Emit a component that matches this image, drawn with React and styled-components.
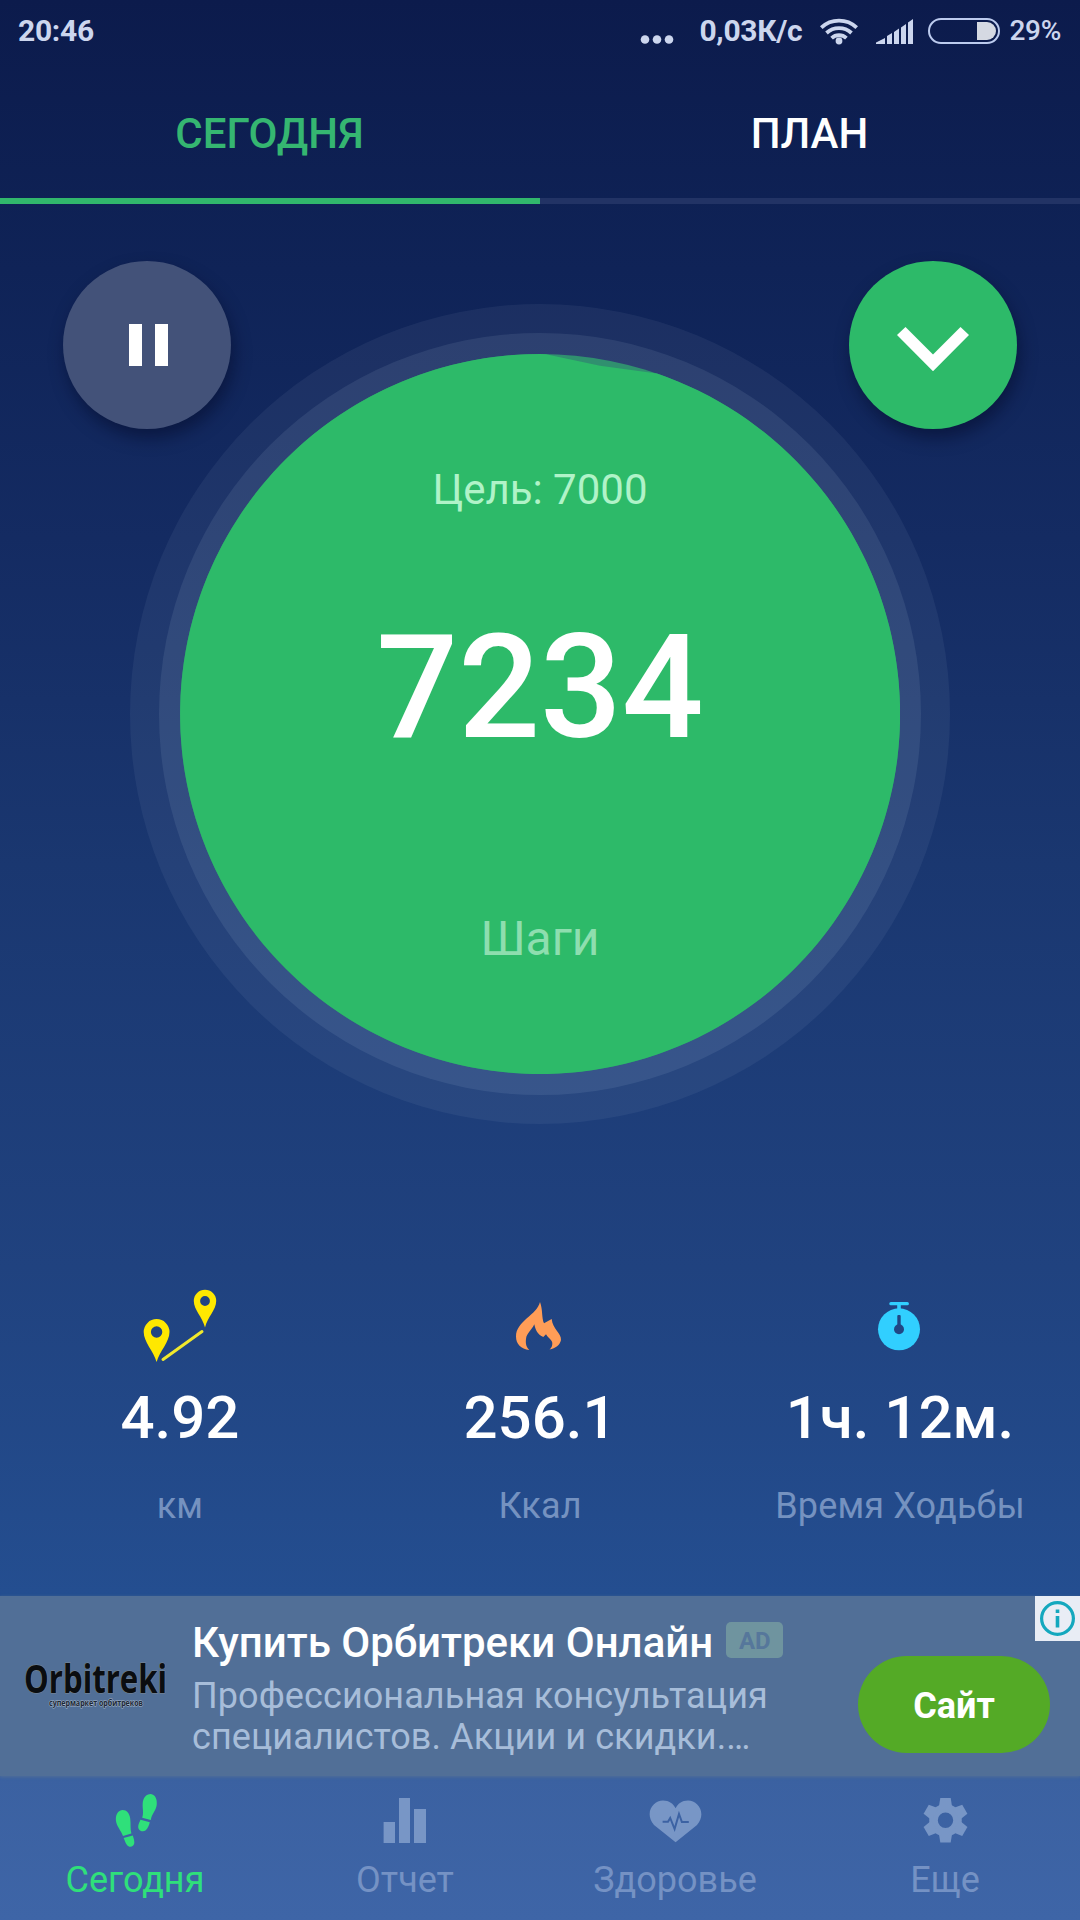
import styled, { createGlobalStyle } from "styled-components";

const GlobalStyle = createGlobalStyle`
    body {
        margin: 0;
        font-family: Roboto, "Noto Sans", sans-serif;
        color: #fff;
    }
`;

const Screen = styled.div`
    display: flex;
    flex-direction: column;
    width: 1080px;
    height: 1920px;
    overflow: hidden;
    background: linear-gradient(180deg, #0c1b4c 0%, #0f2357 14%, #142b62 28%, #1a3770 45%, #20427f 66%, #244e90 83%, #244e90 100%);
`;

const StatusBar = styled.header`
    display: flex;
    align-items: center;
    height: 60px;
    padding: 1px 19px 0 18px;
    box-sizing: border-box;
    color: #ccd6ee;
`;

const StatusText = styled.span`
    font-size: ${({ $size }) => $size || 30}px;
    font-weight: ${({ $weight }) => $weight || 700};
    line-height: 40px;
    letter-spacing: -0.3px;
    white-space: nowrap;
`;

const StatusRight = styled.div`
    display: flex;
    align-items: center;
    margin-left: auto;
`;

const StatusIcons = styled.svg`
    display: block;
    margin: 0 8px 0 17px;
`;

const DotsIcon = styled.svg`
    display: block;
    margin-right: 25px;
`;

const Tabs = styled.nav`
    display: flex;
    height: 144px;
`;

const Tab = styled.div`
    flex: 1;
    box-sizing: border-box;
    padding: 8px 1px 0 0;
    border-bottom: 6px solid ${({ $active }) => ($active ? "#31b76c" : "#223365")};
    color: ${({ $active }) => ($active ? "#35b671" : "#fff")};
    font-size: 42px;
    font-weight: 500;
    line-height: 132px;
    text-align: center;
`;

const Hero = styled.main`
    display: grid;
    height: 1080px;
`;

const HeroActions = styled.div`
    grid-area: 1 / 1;
    display: flex;
    justify-content: space-between;
    align-items: flex-start;
    padding: 57px 63px 0;
`;

const RoundButton = styled.button`
    display: flex;
    width: 168px;
    height: 168px;
    padding: 0;
    border: 0;
    border-radius: 50%;
    background: ${({ $color }) => $color};
    box-shadow: 3px 9px 16px rgba(3, 10, 40, 0.5);
`;

const Dial = styled.div`
    grid-area: 1 / 1;
    justify-self: center;
    align-self: start;
    width: 820px;
    height: 820px;
    box-sizing: border-box;
    margin-top: 100px;
    padding: 29px;
    border-radius: 50%;
    background: rgba(225, 235, 255, 0.06);
`;

const DialRing = styled.div`
    padding: 21px;
    border-radius: 50%;
    background: rgba(220, 238, 255, 0.085);
`;

const Disc = styled.div`
    position: relative;
    display: flex;
    flex-direction: column;
    align-items: center;
    height: 720px;
    box-sizing: border-box;
    padding-top: 111px;
`;

const DiscShape = styled.svg`
    position: absolute;
    inset: 0;
`;

const DiscText = styled.div`
    position: relative;
    margin-bottom: ${({ $gap }) => $gap || 0}px;
    color: ${({ $color }) => $color || "#fff"};
    font-size: ${({ $size }) => $size}px;
    font-weight: ${({ $weight }) => $weight || 400};
    line-height: ${({ $line }) => $line}px;
`;

const Stats = styled.section`
    display: grid;
    grid-template-columns: repeat(3, 1fr);
    height: 312px;
`;

const Stat = styled.div`
    display: flex;
    flex-direction: column;
    align-items: center;
`;

const StatValue = styled.div`
    margin-top: 19px;
    font-size: 60px;
    font-weight: 500;
    line-height: 70px;
`;

const StatLabel = styled.div`
    margin-top: 32px;
    color: #7592c0;
    font-size: 36px;
    line-height: 42px;
    letter-spacing: 0.15px;
`;

const Ad = styled.aside`
    position: relative;
    display: flex;
    height: 180px;
    box-sizing: border-box;
    padding-left: 25px;
    background: #516f97;
    box-shadow: 0 1px 3px #516f97;
`;

const AdLogo = styled.svg`
    overflow: visible;
`;

const AdBody = styled.div`
    width: 650px;
    margin-left: 23px;
    padding-top: 22px;
`;

const AdTitle = styled.div`
    display: flex;
    align-items: center;
    height: 50px;
    font-size: 42px;
    font-weight: 500;
    line-height: 50px;
    white-space: nowrap;
`;

const AdBadge = styled.span`
    width: 57px;
    height: 36px;
    margin: -6px 0 0 13px;
    border-radius: 5px;
    background: #6f949f;
    color: #56779b;
    font-size: 24px;
    font-weight: 700;
    line-height: 38px;
    text-align: center;
`;

const AdText = styled.p`
    margin: 8px 0 0;
    color: #a7bdd9;
    font-size: 36px;
    line-height: 41px;
    letter-spacing: 0.08px;
    white-space: nowrap;
`;

const AdButton = styled.button`
    width: 192px;
    height: 97px;
    margin: 60px 30px 0 auto;
    padding: 3px 0 0;
    border: 0;
    border-radius: 49px;
    background: #54aa26;
    color: #fff;
    font-family: inherit;
    font-size: 36px;
    font-weight: 700;
`;

const AdInfo = styled.svg`
    position: absolute;
    top: 0;
    right: 0;
    background: #e9edf5;
`;

const BottomNav = styled.nav`
    display: grid;
    grid-template-columns: repeat(4, 1fr);
    height: 144px;
    background: linear-gradient(180deg, #3b61a1, #3e65a7);
`;

const NavItem = styled.div`
    display: flex;
    flex-direction: column;
    align-items: center;
    padding-top: 14px;
    color: ${({ $active }) => ($active ? "#2fe07a" : "#7592c4")};
    font-size: 36px;
    line-height: 44px;
`;

const NavIcon = styled.svg`
    display: block;
    margin-bottom: 8px;
`;

function StatusSymbols() {
    return (
        <StatusIcons width="182" height="30" viewBox="819 15 182 30" fill="none">
            <g stroke="#ccd6ee" strokeWidth="3.8">
                <path d="M821.3 26.6a26 26 0 0 1 35.4 0" />
                <path d="M826.5 32a18.4 18.4 0 0 1 25 0" />
                <path d="M831.6 37.2a10.8 10.8 0 0 1 14.8 0" />
            </g>
            <circle cx="839" cy="40" r="3.4" fill="#ccd6ee" />
            <path fill="#ccd6ee" d="M876 43v-1.400l9-4.600V43zM887 43V35l5-3v11zM894 43V31l5-3.500V43zM901 43V26.500l5-3.500v20zM908 43V21.500l5-3.500v25z" />
            <rect x="929" y="18" width="70" height="24" rx="12" stroke="#bccbee" strokeWidth="2" />
            <path fill="#d5d9e2" d="M977 21h10a9 9 0 0 1 0 18h-10z" />
        </StatusIcons>
    );
}

function RouteIcon() {
    return (
        <svg width="120" height="80" fill="#ffe800">
            <path fillRule="evenodd" d="M36.600 78C33.500 67 23.700 58 23.700 48a12.900 12.900 0 0 1 25.800 0C49.500 58 39.700 67 36.600 78zM36.600 42.300a5.700 5.700 0 1 0 0 11.400a5.700 5.700 0 1 0 0-11.400z" />
            <path fillRule="evenodd" d="M85 43.500C82.500 33 73.800 26 73.800 17a11.200 11.200 0 0 1 22.400 0C96.200 26 87.500 33 85 43.500zM85 12.100a4.900 4.900 0 1 0 0 9.800a4.900 4.900 0 1 0 0-9.800z" />
            <path d="M43 75.500L82 47.500" stroke="#f1e92c" strokeWidth="3" strokeLinecap="round" />
        </svg>
    );
}

function FlameIcon() {
    return (
        <svg width="120" height="80" fill="#ff9d57">
            <path d="M60 18C57 31 36 37 36 52.500C36 60 41 65 49.300 66C46 63 45.500 59 46 55C46.500 49 52 46 54.300 40.300C55.300 46 58 51 63.300 53L66 50.300C68 54 72 55.500 72.300 59C72.500 62 71.500 64 69.500 65.500C75.500 64.500 80 61 81 56C81.500 49 72.500 45 71.700 35L64 39.300C61.500 34 63 26 60 18z" />
        </svg>
    );
}

function StopwatchIcon() {
    return (
        <svg width="120" height="80">
            <g fill="#31cfff">
                <circle cx="59" cy="45.300" r="21" />
                <rect x="49.300" y="18" width="19.600" height="3.300" rx="1.600" />
                <rect x="57.200" y="20" width="3.600" height="6" />
            </g>
            <g fill="#214684">
                <circle cx="59" cy="45.300" r="5" />
                <rect x="57.300" y="31" width="3.400" height="14" rx="1" />
            </g>
        </svg>
    );
}

function StepsIcon() {
    return (
        <NavIcon width="60" height="60" fill="#2fe07a">
            <path d="M17.200 20C12.500 20.500 10.300 25.500 11 31C11.500 36 16 40.500 18 46L26.400 43.600C25 39 26 34 25.200 28.500C24.500 23 21.500 19.800 17.200 20z" />
            <path d="M18.600 48L27.800 45.400C28.600 48 29.500 50.500 29.300 53C29 57 24 58 22 55C20.500 53 19.800 50.500 18.600 48z" />
            <path d="M45.800 4C41 4 38 8 37.700 13.500C37.300 18.500 39 22.500 37.200 27.700L45.800 30C46.500 24.500 51 20.500 51.700 15C52.300 9.500 50.500 4.500 45.800 4z" />
            <path d="M35.500 29.800L44.800 32.300C44 35.500 43 38 40.800 40.200C37.500 42.700 33 40.500 33.200 36.500C33.300 34 34.600 32 35.500 29.800z" />
        </NavIcon>
    );
}

function ReportIcon() {
    return (
        <NavIcon width="60" height="60" fill="#7896c6">
            <path d="M8.600 32H20v21H8.600zM24 8h11v45H24zM39 19h12v34H39z" />
        </NavIcon>
    );
}

function HealthIcon() {
    return (
        <NavIcon width="60" height="60" fill="none">
            <path fill="#7896c6" d="M30.600 52.300L9 35C-1 23 8 10.600 18 10.600C24 10.600 28.500 14 30.600 18.300C32.700 14 37 10.600 43 10.600C53 10.600 62 23 52 35z" />
            <path stroke="#3c62a3" strokeWidth="2" d="M17.600 31.800H23L25.200 28L29.600 39L34 24L36.900 32H43.800" />
        </NavIcon>
    );
}

function GearIcon() {
    return (
        <NavIcon width="60" height="60" fill="none">
            <circle cx="30.500" cy="30.300" r="12" stroke="#7896c6" strokeWidth="8.600" />
            {[0, 60, 120, 180, 240, 300].map((angle) => (
                <path key={angle} fill="#7896c6" transform={`rotate(${angle} 30.500 30.300)`} d="M25.300 8h10.400l1.600 10h-13.600z" />
            ))}
        </NavIcon>
    );
}

const stats = [
    { icon: <RouteIcon />, value: "4.92", label: "км" },
    { icon: <FlameIcon />, value: "256.1", label: "Ккал" },
    { icon: <StopwatchIcon />, value: "1ч. 12м.", label: "Время Ходьбы" },
];

const navItems = [
    { icon: <StepsIcon />, label: "Сегодня", active: true },
    { icon: <ReportIcon />, label: "Отчет" },
    { icon: <HealthIcon />, label: "Здоровье" },
    { icon: <GearIcon />, label: "Еще" },
];

function StepDial() {
    return (
        <Dial>
            <DialRing>
                <Disc>
                    <DiscShape width="720" height="720">
                        <circle cx="360" cy="360" r="360" fill="#30906f" />
                        {/* progress arc starts a little past the top */}
                        <path fill="#2dba69" d="M477 19.500A360 360 0 1 1 360 0L366 0.300L420 11.800z" />
                    </DiscShape>
                    <DiscText $size={42} $line={50} $gap={89} $color="#b0f3c8">Цель: 7000</DiscText>
                    <DiscText $size={144} $line={168} $gap={139} $weight={500}>7234</DiscText>
                    <DiscText $size={48} $line={56} $color="#8edeaf">Шаги</DiscText>
                </Disc>
            </DialRing>
        </Dial>
    );
}

function AdBanner() {
    return (
        <Ad>
            <AdLogo width="144" height="180">
                <text x="-1" y="97" fill="#0a0d10" stroke="#7d8893" strokeWidth="1" paintOrder="stroke" fontFamily="Open Sans" fontWeight="700" fontSize="39" textLength="143" lengthAdjust="spacingAndGlyphs">Orbitreki</text>
                <text x="24" y="110" fill="#1c2836" stroke="#a9b9cc" strokeWidth="1" paintOrder="stroke" fontFamily="Open Sans" fontWeight="700" fontSize="9" textLength="94" lengthAdjust="spacingAndGlyphs">супермаркет орбитреков</text>
            </AdLogo>
            <AdBody>
                <AdTitle>
                    Купить Орбитреки Онлайн
                    <AdBadge>AD</AdBadge>
                </AdTitle>
                <AdText>
                    Профессиональная консультация
                    <br />
                    специалистов. Акции и скидки.…
                </AdText>
            </AdBody>
            <AdButton>Сайт</AdButton>
            <AdInfo width="45" height="45">
                <circle cx="22.500" cy="22.500" r="15.900" fill="none" stroke="#14a8be" strokeWidth="3.200" />
                <path fill="#14a8be" d="M20.700 13.500h3.600v3.600h-3.600zM20.700 20h3.600v11.500h-3.600z" />
            </AdInfo>
        </Ad>
    );
}

export default function App() {
    return (
        <Screen>
            <GlobalStyle />
            <StatusBar>
                <StatusText>20:46</StatusText>
                <StatusRight>
                    <DotsIcon width="34" height="30" fill="#ccd6ee">
                        <circle cx="5" cy="23.500" r="4.300" />
                        <circle cx="17" cy="23.500" r="4.300" />
                        <circle cx="29" cy="23.500" r="4.300" />
                    </DotsIcon>
                    <StatusText>0,03К/с</StatusText>
                    <StatusSymbols />
                    <StatusText $size={28} $weight={500}>29%</StatusText>
                </StatusRight>
            </StatusBar>
            <Tabs>
                <Tab $active>СЕГОДНЯ</Tab>
                <Tab>ПЛАН</Tab>
            </Tabs>
            <Hero>
                <StepDial />
                <HeroActions>
                    <RoundButton $color="#435279" aria-label="Пауза">
                        <svg width="168" height="168" fill="#fff">
                            <path d="M66 63h13v42H66zM92 63h13v42H92z" />
                        </svg>
                    </RoundButton>
                    <RoundButton $color="#2dba69" aria-label="Развернуть">
                        <svg width="168" height="168" fill="#fff">
                            <path d="M48 74l8.500-8L84 93.500L111.500 66l8.500 8L84 110.300z" />
                        </svg>
                    </RoundButton>
                </HeroActions>
            </Hero>
            <Stats>
                {stats.map(({ icon, value, label }) => (
                    <Stat key={label}>
                        {icon}
                        <StatValue>{value}</StatValue>
                        <StatLabel>{label}</StatLabel>
                    </Stat>
                ))}
            </Stats>
            <AdBanner />
            <BottomNav>
                {navItems.map(({ icon, label, active }) => (
                    <NavItem key={label} $active={active}>
                        {icon}
                        {label}
                    </NavItem>
                ))}
            </BottomNav>
        </Screen>
    );
}
